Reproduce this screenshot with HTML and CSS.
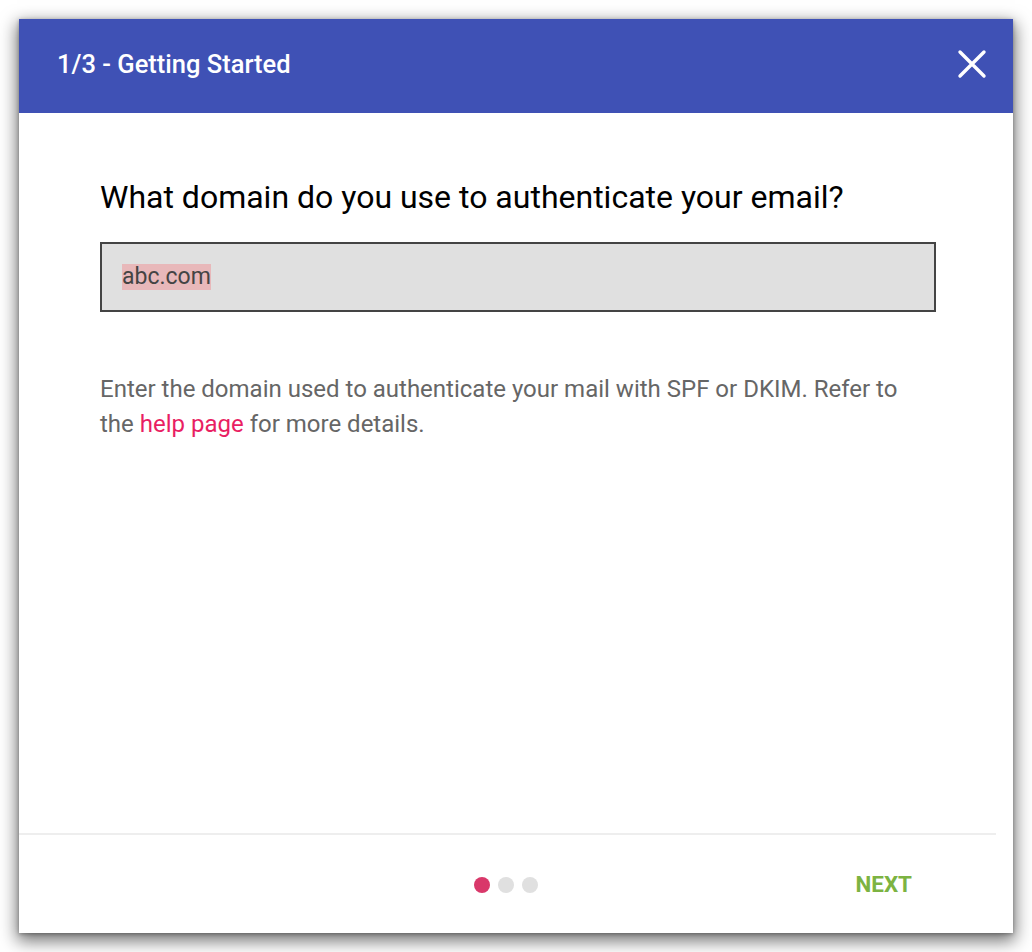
FILE: index.html
```html
<!DOCTYPE html>
<html>
  <head>
    <meta charset="utf-8" />
    <link rel="stylesheet" href="styles.css">
  </head>

  <body class="wizard-body">
    <div class="wizard-dialog">
      <div class="wizard-header">
        <span class="wizard-header-title">1/3 - Getting Started</span>
        <button class="wizard-close" aria-label="Close">
          <svg height="32" viewBox="0 0 32 32" width="32">
            <path d="M4 4L28 28M28 4L4 28" />
          </svg>
        </button>
      </div>

      <div class="wizard-content">
        <h2 class="wizard-question">What domain do you use to authenticate your email?</h2>
        <div class="wizard-input">
          <span class="wizard-input-value">abc.com</span>
        </div>
        <p class="wizard-help">
          Enter the domain used to authenticate your mail with SPF or DKIM. Refer to
          the <a class="wizard-link" href="#">help page</a> for more details.
        </p>
      </div>

      <div class="wizard-footer">
        <div></div>
        <div class="wizard-steps">
          <span class="wizard-step wizard-step-active"></span>
          <span class="wizard-step"></span>
          <span class="wizard-step"></span>
        </div>
        <button class="wizard-next">NEXT</button>
      </div>
    </div>
  </body>
</html>
```

FILE: styles.css
```css
:root {
  --primary: #3f51b5;
  --accent: #e91e63;
  --font: Roboto, 'Helvetica', 'Arial', sans-serif;
}

body {
  font-family: var(--font);
}

.wizard-body {
  margin: 0;
  padding: 19px;
  background: #ffffff;
}

.wizard-dialog {
  display: flex;
  flex-direction: column;
  width: 994px;
  height: 914px;
  background: #ffffff;
  box-shadow: 0px 6px 16px 2px rgba(0, 0, 0, 0.55), 0px 1px 4px rgba(0, 0, 0, 0.3);
}

.wizard-header {
  display: flex;
  align-items: center;
  justify-content: space-between;
  height: 94px;
  padding: 0 25px 4px 38px;
  box-sizing: border-box;
  background-color: var(--primary);
  color: #ffffff;
}

.wizard-header-title {
  font-size: 25.5px;
  font-weight: 500;
}

.wizard-close {
  display: inline-flex;
  padding: 0;
  border: 0;
  background: transparent;
  stroke: #ffffff;
  stroke-width: 3.4;
  stroke-linecap: round;
  cursor: pointer;
}

.wizard-content {
  flex: 1 0 auto;
  padding: 66px 77px 0 81px;
}

.wizard-question {
  margin: 0 0 27px;
  font-size: 32px;
  font-weight: 400;
  line-height: 36px;
  color: #000000;
}

.wizard-input {
  display: flex;
  align-items: center;
  height: 66px;
  padding: 0 20px;
  border: 2px solid #444444;
  background-color: #e0e0e0;
}

.wizard-input-value {
  font-size: 23px;
  line-height: 26px;
  color: #444444;
  background-color: #e8b8ba;
}

.wizard-help {
  margin: 60px 0 0;
  font-size: 24px;
  line-height: 35px;
  color: #666666;
}

.wizard-link {
  color: var(--accent);
  text-decoration: none;
}

.wizard-footer {
  display: grid;
  grid-template-columns: 1fr auto 1fr;
  align-items: center;
  height: 98px;
  margin-right: 17px;
  border-top: 2px solid #eeeeee;
}

.wizard-steps {
  display: flex;
  gap: 8px;
  padding-top: 2px;
  margin-right: 4px;
}

.wizard-step {
  width: 16px;
  height: 16px;
  border-radius: 50%;
  background-color: #e0e0e0;
}

.wizard-step-active {
  background-color: #d9386a;
}

.wizard-next {
  justify-self: end;
  margin-right: 84px;
  padding: 0;
  border: 0;
  background: transparent;
  color: #7cb342;
  font-family: var(--font);
  font-size: 22.4px;
  font-weight: 700;
  cursor: pointer;
}
```
